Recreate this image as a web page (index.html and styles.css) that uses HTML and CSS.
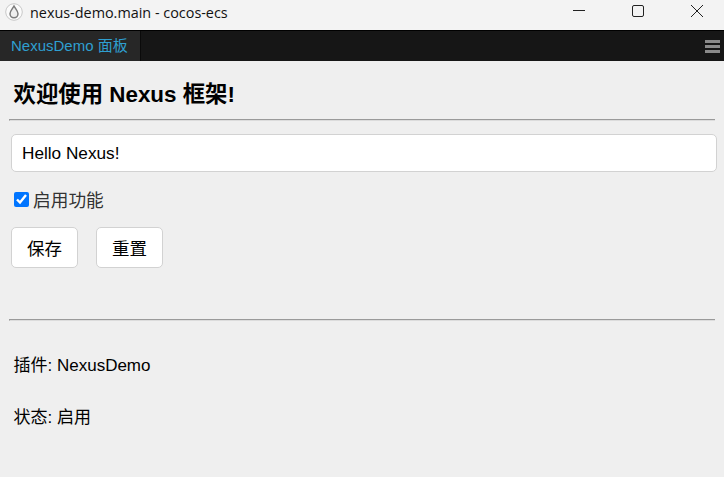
FILE: index.html
```html
<!DOCTYPE html>
<html lang="zh">
<head>
<meta charset="utf-8">
<title>nexus-demo.main - cocos-ecs</title>
<link rel="stylesheet" href="styles.css">
</head>
<body>
<header class="titlebar">
  <svg class="app-icon" width="18" height="18" viewBox="0 0 18 18">
    <circle cx="9" cy="9" r="8.300" fill="#fbfbfb" stroke="#c8c8c8"/>
    <path d="M9 3C7.500 5.800 5 7.800 5 10.800a4 4 0 0 0 8 0C13 7.800 10.500 5.800 9 3Z" fill="#eeeeee" stroke="#7c7c7c" stroke-width="1.500"/>
  </svg>
  <span class="win-title">nexus-demo.main - cocos-ecs</span>
  <div class="win-controls">
    <button class="win-btn" aria-label="最小化"><svg width="12" height="12" viewBox="0 0 12 12"><path d="M0 5.500H12" stroke="#222" stroke-width="1"/></svg></button>
    <button class="win-btn" aria-label="最大化"><svg width="12" height="12" viewBox="0 0 12 12"><rect x=".5" y=".5" width="11" height="11" rx="1.500" fill="none" stroke="#222"/></svg></button>
    <button class="win-btn" aria-label="关闭"><svg width="12" height="12" viewBox="0 0 12 12"><path d="M0 0L12 12M12 0L0 12" stroke="#222" stroke-width="1"/></svg></button>
  </div>
</header>
<nav class="tabbar">
  <div class="tab">NexusDemo 面板</div>
  <div class="menu" aria-label="菜单"><i></i><i></i><i></i></div>
</nav>
<main class="panel">
  <h2 class="heading">欢迎使用 Nexus 框架!</h2>
  <hr class="rule">
  <input class="text-input" type="text" value="Hello Nexus!">
  <label class="check"><input type="checkbox" checked><span>启用功能</span></label>
  <div class="actions">
    <button class="btn">保存</button>
    <button class="btn">重置</button>
  </div>
  <hr class="rule rule-lower">
  <p class="info first">插件: NexusDemo</p>
  <p class="info">状态: 启用</p>
</main>
</body>
</html>
```
FILE: styles.css
```css
* { box-sizing: border-box; }
html, body { margin: 0; height: 100%; overflow: hidden; }
body {
  background: #efefef;
  font-family: "Liberation Sans", "Noto Sans CJK SC", sans-serif;
  color: #000;
}
.titlebar {
  height: 30px;
  background: #f3f3f3;
  display: flex;
  align-items: center;
  padding-left: 5px;
  padding-bottom: 6px;
}
.app-icon { flex: none; }
.win-title {
  margin-left: 7px;
  font-family: "Open Sans", "Noto Sans", sans-serif;
  font-size: 14.400px;
  color: #111;
}
.win-controls {
  margin-left: auto;
  display: flex;
  gap: 5px;
  height: 30px;
  margin-bottom: -6px;
}
.win-btn {
  width: 54px;
  border: 0;
  padding: 0 0 8px;
  background: transparent;
  display: flex;
  align-items: center;
  justify-content: center;
}
.tabbar {
  height: 31px;
  background: #161616;
  border-top: 1px solid #000;
  display: flex;
  justify-content: space-between;
  align-items: stretch;
}
.tab {
  width: 141px;
  background: #272727;
  border-right: 1px solid #0a0a0a;
  color: #2f9fd0;
  font-size: 15px;
  line-height: 30px;
  padding-left: 11px;
}
.menu {
  width: 15px;
  margin-right: 4px;
  display: flex;
  flex-direction: column;
  justify-content: center;
  gap: 2px;
}
.menu i { display: block; height: 3px; background: #8a8a8a; }
.panel { padding: 0 9px; }
.heading {
  margin: 0;
  padding: 20px 0 0 4.500px;
  font-size: 22.400px;
  line-height: 28px;
  font-weight: 700;
}
.rule {
  margin: 10px 0 0;
  border: 0;
  border-top: 1px solid #9a9a9a;
  border-bottom: 1px solid #dcdcdc;
  border-left: 1px solid #9a9a9a;
  height: 2px;
}
.text-input {
  display: block;
  width: 706px;
  height: 38px;
  margin: 13px 0 0 2px;
  padding: 0 10px;
  border: 1px solid #d2d2d2;
  border-radius: 5px;
  background: #fff;
  font: 17.200px "Liberation Sans", sans-serif;
  color: #000;
}
.check {
  display: flex;
  align-items: center;
  margin: 15px 0 0 5px;
  height: 24px;
  font-size: 17.700px;
  color: #333;
}
.check input { width: 15px; height: 15px; margin: 0 4px 0 0; accent-color: #0075ff; }
.actions { display: flex; gap: 18px; margin: 16px 0 0 2px; }
.btn {
  width: 67px;
  height: 41px;
  padding: 0;
  border: 1px solid #d2d2d2;
  border-radius: 5px;
  background: #fff;
  font: 17.500px "Liberation Sans", "Noto Sans CJK SC", sans-serif;
  color: #000;
}
.rule-lower { margin-top: 51px; }
.info { margin: 0; padding-left: 4.500px; font-size: 17px; line-height: 24px; }
.info.first { margin-top: 33px; }
.info + .info { margin-top: 28px; }
```
